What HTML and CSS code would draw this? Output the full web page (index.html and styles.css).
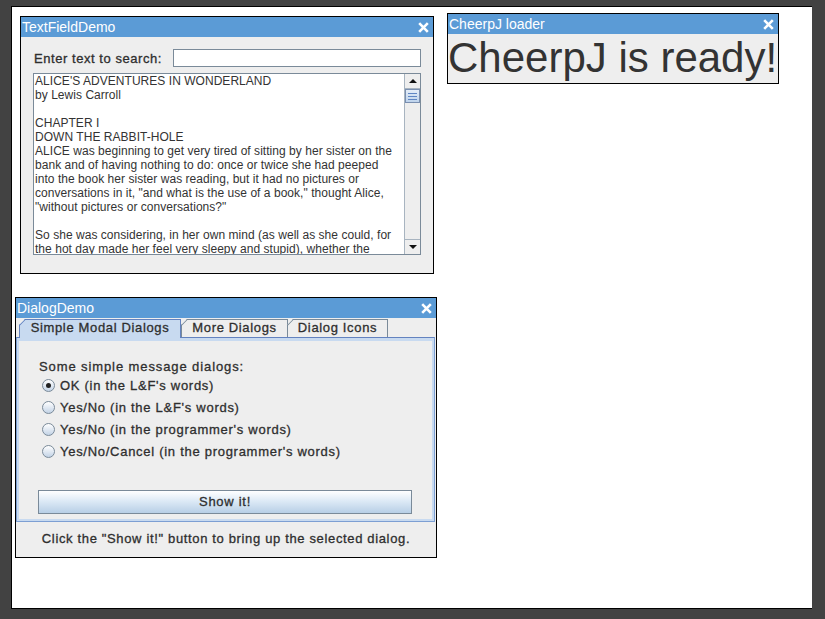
FILE: index.html
```html
<!DOCTYPE html>
<html>
<head>
<meta charset="utf-8">
<link rel="stylesheet" href="styles.css">
</head>
<body>
<div class="desktop">

  <div class="win win-text">
    <div class="titlebar"><span class="title">TextFieldDemo</span>
      <svg class="close" viewBox="0 0 11 11" width="11" height="11"><path d="M1.2 1.2L9.8 9.8M9.8 1.2L1.2 9.8"/></svg>
    </div>
    <div class="text-body">
      <div class="search-row">
        <span class="lbl lbl-search">Enter text to search:</span>
        <div class="field"></div>
      </div>
      <div class="textarea">
        <div class="pane">ALICE'S ADVENTURES IN WONDERLAND
by Lewis Carroll

CHAPTER I
DOWN THE RABBIT-HOLE
ALICE was beginning to get very tired of sitting by her sister on the
bank and of having nothing to do: once or twice she had peeped
into the book her sister was reading, but it had no pictures or
conversations in it, "and what is the use of a book," thought Alice,
"without pictures or conversations?"

So she was considering, in her own mind (as well as she could, for
the hot day made her feel very sleepy and stupid), whether the</div>
        <div class="sb">
          <div class="sb-btn"><span class="arr-up"></span></div>
          <div class="sb-thumb"><i></i><i></i><i></i></div>
          <div class="sb-track"></div>
          <div class="sb-btn sb-down"><span class="arr-down"></span></div>
        </div>
      </div>
    </div>
  </div>

  <div class="win win-loader">
    <div class="titlebar"><span class="title">CheerpJ loader</span>
      <svg class="close" viewBox="0 0 11 11" width="11" height="11"><path d="M1.2 1.2L9.8 9.8M9.8 1.2L1.2 9.8"/></svg>
    </div>
    <div class="loader-body">CheerpJ is ready!</div>
  </div>

  <div class="win win-dialog">
    <div class="titlebar"><span class="title">DialogDemo</span>
      <svg class="close" viewBox="0 0 11 11" width="11" height="11"><path d="M1.2 1.2L9.8 9.8M9.8 1.2L1.2 9.8"/></svg>
    </div>
    <div class="tabs">
      <div class="tab sel">Simple Modal Dialogs</div>
      <div class="tab t2">More Dialogs</div>
      <div class="tab t3">Dialog Icons</div>
    </div>
    <div class="panel">
      <div class="panel-in">
        <div class="lbl p-lbl">Some simple message dialogs:</div>
        <div class="radio-row"><span class="radio on"></span><span class="lbl">OK (in the L&amp;F's words)</span></div>
        <div class="radio-row"><span class="radio"></span><span class="lbl">Yes/No (in the L&amp;F's words)</span></div>
        <div class="radio-row"><span class="radio"></span><span class="lbl">Yes/No (in the programmer's words)</span></div>
        <div class="radio-row"><span class="radio"></span><span class="lbl">Yes/No/Cancel (in the programmer's words)</span></div>
        <div class="btn lbl">Show it!</div>
      </div>
    </div>
    <div class="footer lbl">Click the "Show it!" button to bring up the selected dialog.</div>
  </div>

</div>
</body>
</html>
```
FILE: styles.css
```css
html, body {
  margin: 0;
  padding: 0;
}
body {
  background: #424242;
  width: 825px;
  height: 619px;
  overflow: hidden;
  font-family: "Liberation Sans", Arial, sans-serif;
}
.desktop {
  position: relative;
  margin: 6px 0 0 11px;
  width: 801px;
  height: 603px;
  box-sizing: border-box;
  background: #fff;
  border-top: 1px solid #000;
  border-left: 1px solid #000;
  border-bottom: 1px solid #000;
}
.win {
  position: absolute;
  box-sizing: border-box;
  border: 1px solid #000;
  background: #eeeeee;
  display: flex;
  flex-direction: column;
}
.win-text { left: 8px; top: 9px; width: 414px; height: 258px; }
.win-loader { left: 435px; top: 6px; width: 332px; height: 71px; }
.win-dialog { left: 3px; top: 290px; width: 422px; height: 261px; }

.titlebar {
  height: 20px;
  flex: none;
  background: #5b9bd6;
  display: flex;
  align-items: center;
  justify-content: space-between;
  padding: 0 4px 0 1px;
}
.title {
  color: #fff;
  font-size: 14px;
  line-height: 20px;
}
.close path {
  stroke: #fff;
  stroke-width: 2.6;
  fill: none;
}

.lbl {
  font-weight: normal;
  font-size: 13px;
  color: #2e2e2e;
  letter-spacing: 0.72px;
  -webkit-text-stroke: 0.3px #2e2e2e;
}

/* TextFieldDemo */
.text-body {
  padding: 12px 12px 0 12px;
  display: flex;
  flex-direction: column;
}
.search-row {
  display: flex;
  align-items: center;
  height: 18px;
}
.lbl-search {
  padding-left: 1px;
  width: 139px;
  letter-spacing: 0.55px;
}
.field {
  flex: 1;
  height: 18px;
  box-sizing: border-box;
  border: 1px solid #7a8a99;
  background: #fff;
}
.textarea {
  margin-top: 6px;
  height: 182px;
  box-sizing: border-box;
  border: 1px solid #7a8a99;
  background: #fff;
  display: flex;
  overflow: hidden;
}
.pane {
  flex: 1;
  white-space: pre;
  overflow: hidden;
  font-size: 12px;
  line-height: 14px;
  letter-spacing: 0.04px;
  color: #333;
  padding: 0 0 0 1px;
}
.sb {
  width: 15px;
  flex: none;
  border-left: 1px solid #a8b4c0;
  background: #eeeeee;
  display: flex;
  flex-direction: column;
}
.sb-btn {
  height: 14px;
  flex: none;
  border-bottom: 1px solid #a8b4c0;
  display: flex;
  align-items: center;
  justify-content: center;
}
.sb-down {
  border-bottom: none;
  border-top: 1px solid #a8b4c0;
}
.arr-up {
  width: 0; height: 0;
  border-left: 4px solid transparent;
  border-right: 4px solid transparent;
  border-bottom: 4px solid #111;
}
.arr-down {
  width: 0; height: 0;
  border-left: 4px solid transparent;
  border-right: 4px solid transparent;
  border-top: 4px solid #111;
}
.sb-thumb {
  height: 14px;
  flex: none;
  box-sizing: border-box;
  border: 1px solid #7a8fb0;
  background: linear-gradient(#e4edf8, #bed3ec);
  display: flex;
  flex-direction: column;
  align-items: center;
  justify-content: center;
  gap: 2px;
}
.sb-thumb i {
  display: block;
  width: 9px;
  height: 1px;
  background: #5f86c4;
}
.sb-track { flex: 1; }

/* Loader */
.loader-body {
  font-size: 42px;
  line-height: 47px;
  color: #333;
  padding-left: 0;
  white-space: nowrap;
}

/* DialogDemo */
.tabs {
  height: 19px;
  flex: none;
  display: flex;
  align-items: flex-end;
  padding-left: 3px;
}
.tab {
  position: relative;
  height: 18px;
  box-sizing: border-box;
  border: 1px solid #7a8a99;
  border-bottom: none;
  background: #eeeeee;
  font-size: 13px;
  color: #2e2e2e;
  letter-spacing: 0.65px;
  -webkit-text-stroke: 0.3px #2e2e2e;
  line-height: 16px;
  text-align: center;
  clip-path: polygon(6px 0, 100% 0, 100% 100%, 0 100%, 0 6px);
}
.tab::before {
  content: "";
  position: absolute;
  left: -1px;
  top: 5px;
  width: 9px;
  height: 1px;
  background: #7a8a99;
  transform-origin: 0 0;
  transform: rotate(-45deg);
}
.tab.sel {
  width: 162px;
  height: 19px;
  border-color: #6382bf;
  background: #c8daf0;
  z-index: 1;
  margin-bottom: -1px;
}
.tab.sel::before { background: #6382bf; }
.tab.t2 { width: 107px; }
.tab.t3 { width: 101px; margin-left: -1px; }

.panel {
  height: 185px;
  flex: none;
  box-sizing: border-box;
  border: 1px solid #7d9fd3;
  margin-right: 1px;
  border-top-color: #6382bf;
}
.panel-in {
  height: 100%;
  box-sizing: border-box;
  border: 2px solid #c8daf0;
  border-top-width: 3px;
  padding: 19px 0 0 20px;
  display: flex;
  flex-direction: column;
  align-items: flex-start;
}
.p-lbl {
  line-height: 14px;
  letter-spacing: 0.9px;
}
.radio-row {
  height: 22px;
  display: flex;
  align-items: center;
  gap: 5px;
  padding-left: 3px;
}
.radio {
  position: relative;
  width: 13px;
  height: 13px;
  box-sizing: border-box;
  border-radius: 50%;
  border: 1px solid #7a8a99;
  background: linear-gradient(#ffffff, #c3d3e6);
}
.radio.on::after {
  content: "";
  position: absolute;
  left: 3px;
  top: 3px;
  width: 5px;
  height: 5px;
  border-radius: 50%;
  background: #222;
}
.btn {
  margin-top: 28px;
  margin-left: -1px;
  width: 374px;
  height: 24px;
  box-sizing: border-box;
  border: 1px solid #7a8a99;
  background: linear-gradient(#ffffff, #ddeaf6 45%, #b8cfe6);
  text-align: center;
  line-height: 22px;
}
.footer {
  flex: 1;
  display: flex;
  align-items: center;
  justify-content: center;
  letter-spacing: 0.65px;
  padding-bottom: 2px;
}
```
